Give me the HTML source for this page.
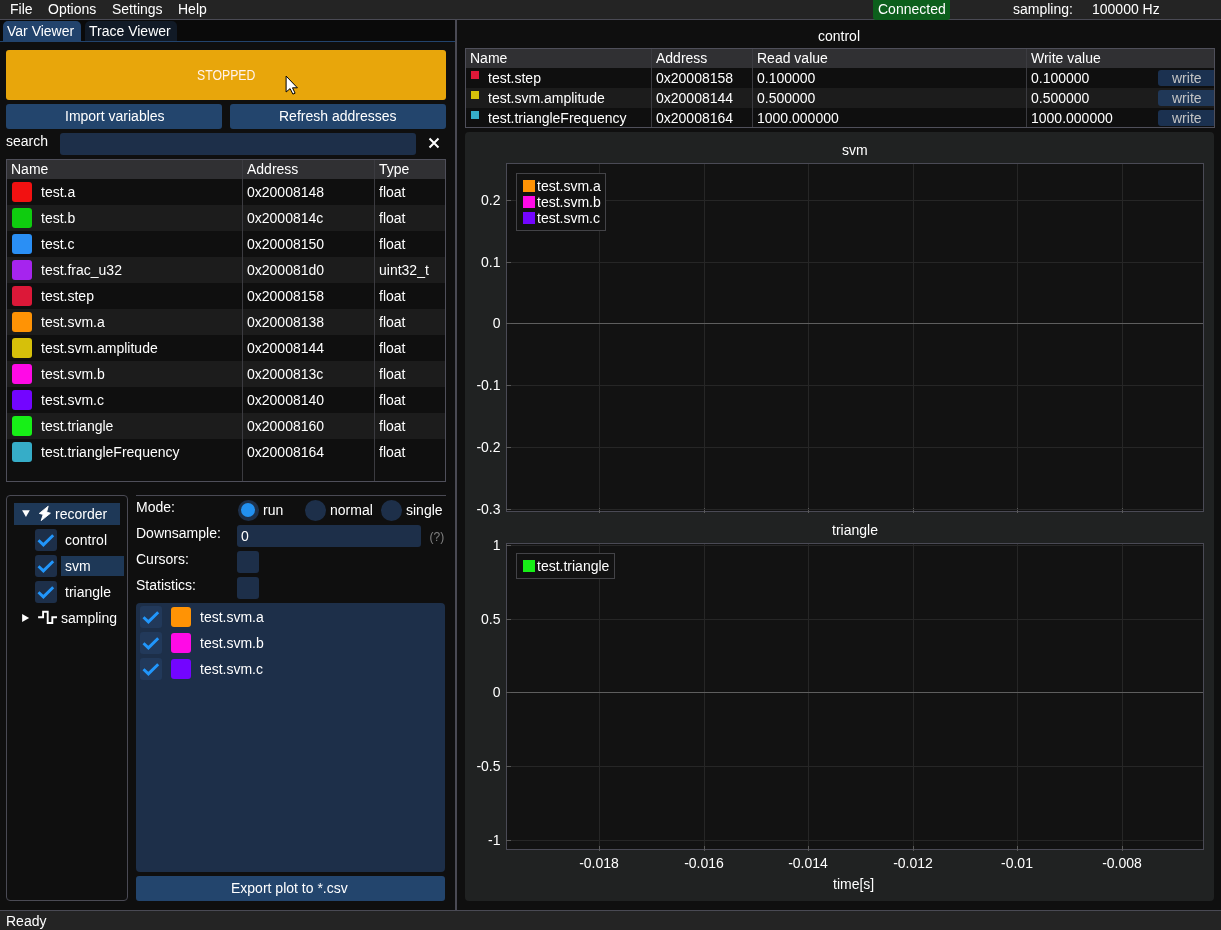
<!DOCTYPE html>
<html><head><meta charset="utf-8">
<style>
*{margin:0;padding:0;box-sizing:border-box}
html,body{width:1221px;height:930px;overflow:hidden;-webkit-font-smoothing:antialiased;background:#0f0f0f;font-family:"Liberation Sans",sans-serif;font-size:14px;color:#fff}
.a{position:absolute}
.t{position:absolute;white-space:nowrap;line-height:16px;font-size:14px;color:#fff}
.btn{position:absolute;background:#23456d;border-radius:3px}
.frame{position:absolute;background:#1d2f49;border-radius:3px}
.hl{position:absolute;background:#1e3857}
.cb{position:absolute;width:22px;height:22px;background:#1d2f49;border-radius:3px}
.sw{position:absolute;width:20px;height:20px;border-radius:3px}
.hline{position:absolute;height:1px}
.vline{position:absolute;width:1px}
#root{position:absolute;left:0;top:0;width:1221px;height:930px;will-change:transform}
</style></head><body><div id="root">

<!-- menu bar -->
<div class="a" style="left:0;top:0;width:1221px;height:19px;background:#242424"></div>
<div class="a" style="left:0;top:19px;width:1221px;height:1px;background:#4a4a54"></div>
<div class="t" style="left:10px;top:1px">File</div>
<div class="t" style="left:48px;top:1px">Options</div>
<div class="t" style="left:112px;top:1px">Settings</div>
<div class="t" style="left:178px;top:1px">Help</div>
<div class="a" style="left:873px;top:0;width:77px;height:20px;background:#0c5f1c;border-radius:0 0 3px 3px"></div>
<div class="t" style="left:878px;top:1px">Connected</div>
<div class="t" style="left:1013px;top:1px">sampling:</div>
<div class="t" style="left:1092px;top:1px">100000 Hz</div>

<!-- status bar -->
<div class="a" style="left:0;top:910px;width:1221px;height:1px;background:#4a4a54"></div>
<div class="a" style="left:0;top:911px;width:1221px;height:19px;background:#242424"></div>
<div class="t" style="left:6px;top:913px">Ready</div>

<!-- dock separator -->
<div class="a" style="left:455px;top:20px;width:2px;height:890px;background:#4a4a54"></div>

<!-- LEFT PANEL -->
<div class="a" style="left:0;top:20px;width:455px;height:21px;background:#0a0a0a"></div>
<div class="a" style="left:3px;top:21px;width:78px;height:20px;background:#22436c;border-radius:5px 5px 0 0"></div>
<div class="a" style="left:85px;top:21px;width:92px;height:20px;background:#111a26;border-radius:5px 5px 0 0"></div>
<div class="a" style="left:0;top:41px;width:455px;height:1px;background:#22436c"></div>
<div class="t" style="left:7px;top:23px">Var Viewer</div>
<div class="t" style="left:89px;top:23px">Trace Viewer</div>

<!-- stopped button -->
<div class="a" style="left:6px;top:50px;width:440px;height:50px;background:#e8a60b;border-radius:3px"></div>
<div class="t" style="left:197px;top:67px;color:#fff3ee;transform:scaleX(0.875);transform-origin:0 0">STOPPED</div>
<svg class="a" style="left:284.8px;top:75.3px" width="15" height="21" viewBox="0 0 15 21"><path d="M1.1 1.1V17L5.1 13.6L7.9 19.1L10.1 18.2L7.5 12.8H12.4Z" fill="#fff" stroke="#000" stroke-width="1" stroke-linejoin="miter"/></svg>
<div class="btn" style="left:6px;top:104px;width:216px;height:25px"></div>
<div class="t" style="left:65px;top:108px">Import variables</div>
<div class="btn" style="left:230px;top:104px;width:216px;height:25px"></div>
<div class="t" style="left:279px;top:108px">Refresh addresses</div>
<div class="t" style="left:6px;top:133px">search</div>
<div class="frame" style="left:60px;top:133px;width:356px;height:22px"></div>
<svg class="a" style="left:428px;top:137px" width="12" height="12" viewBox="0 0 12 12"><path d="M1.5 1.5L10.5 10.5M10.5 1.5L1.5 10.5" stroke="#fff" stroke-width="2"/></svg>
<!-- var table -->
<div class="a" style="left:6px;top:159px;width:440px;height:323px;border:1px solid #4f4f5a"></div>
<div class="a" style="left:7px;top:160px;width:438px;height:19px;background:#303033"></div>
<div class="a" style="left:7px;top:205px;width:438px;height:26px;background:#1c1c1c"></div>
<div class="a" style="left:7px;top:257px;width:438px;height:26px;background:#1c1c1c"></div>
<div class="a" style="left:7px;top:309px;width:438px;height:26px;background:#1c1c1c"></div>
<div class="a" style="left:7px;top:361px;width:438px;height:26px;background:#1c1c1c"></div>
<div class="a" style="left:7px;top:413px;width:438px;height:26px;background:#1c1c1c"></div>
<div class="a" style="left:242px;top:160px;width:1px;height:321px;background:#3b3b40"></div>
<div class="a" style="left:374px;top:160px;width:1px;height:321px;background:#3b3b40"></div>
<div class="t" style="left:11px;top:161px">Name</div>
<div class="t" style="left:247px;top:161px">Address</div>
<div class="t" style="left:379px;top:161px">Type</div>
<div class="sw" style="left:12px;top:182px;background:#f21111"></div>
<div class="t" style="left:41px;top:184px">test.a</div>
<div class="t" style="left:247px;top:184px">0x20008148</div>
<div class="t" style="left:379px;top:184px">float</div>
<div class="sw" style="left:12px;top:208px;background:#0fcc0f"></div>
<div class="t" style="left:41px;top:210px">test.b</div>
<div class="t" style="left:247px;top:210px">0x2000814c</div>
<div class="t" style="left:379px;top:210px">float</div>
<div class="sw" style="left:12px;top:234px;background:#2a8ff5"></div>
<div class="t" style="left:41px;top:236px">test.c</div>
<div class="t" style="left:247px;top:236px">0x20008150</div>
<div class="t" style="left:379px;top:236px">float</div>
<div class="sw" style="left:12px;top:260px;background:#a624ee"></div>
<div class="t" style="left:41px;top:262px">test.frac_u32</div>
<div class="t" style="left:247px;top:262px">0x200081d0</div>
<div class="t" style="left:379px;top:262px">uint32_t</div>
<div class="sw" style="left:12px;top:286px;background:#dc1838"></div>
<div class="t" style="left:41px;top:288px">test.step</div>
<div class="t" style="left:247px;top:288px">0x20008158</div>
<div class="t" style="left:379px;top:288px">float</div>
<div class="sw" style="left:12px;top:312px;background:#ff9305"></div>
<div class="t" style="left:41px;top:314px">test.svm.a</div>
<div class="t" style="left:247px;top:314px">0x20008138</div>
<div class="t" style="left:379px;top:314px">float</div>
<div class="sw" style="left:12px;top:338px;background:#d6c00a"></div>
<div class="t" style="left:41px;top:340px">test.svm.amplitude</div>
<div class="t" style="left:247px;top:340px">0x20008144</div>
<div class="t" style="left:379px;top:340px">float</div>
<div class="sw" style="left:12px;top:364px;background:#ff0ae6"></div>
<div class="t" style="left:41px;top:366px">test.svm.b</div>
<div class="t" style="left:247px;top:366px">0x2000813c</div>
<div class="t" style="left:379px;top:366px">float</div>
<div class="sw" style="left:12px;top:390px;background:#7305ff"></div>
<div class="t" style="left:41px;top:392px">test.svm.c</div>
<div class="t" style="left:247px;top:392px">0x20008140</div>
<div class="t" style="left:379px;top:392px">float</div>
<div class="sw" style="left:12px;top:416px;background:#17f017"></div>
<div class="t" style="left:41px;top:418px">test.triangle</div>
<div class="t" style="left:247px;top:418px">0x20008160</div>
<div class="t" style="left:379px;top:418px">float</div>
<div class="sw" style="left:12px;top:442px;background:#36adc8"></div>
<div class="t" style="left:41px;top:444px">test.triangleFrequency</div>
<div class="t" style="left:247px;top:444px">0x20008164</div>
<div class="t" style="left:379px;top:444px">float</div>
<!-- tree child -->
<div class="a" style="left:6px;top:495px;width:122px;height:406px;border:1px solid #4a4a54;border-radius:4px"></div>
<div class="hl" style="left:14px;top:503px;width:106px;height:22px"></div>
<svg class="a" style="left:22px;top:509px" width="9" height="9" viewBox="0 0 9 9"><path d="M0.1 1.2H7.8L3.95 7.9Z" fill="#fff"/></svg>
<svg class="a" style="left:38px;top:505px" width="14" height="17" viewBox="0 0 14 17"><path d="M10.2 1.2L1.3 8.4L5.2 9.4L3.2 15.6L12.4 8.2L8.6 7.1Z" fill="#fff" stroke="#fff" stroke-width="0.9" stroke-linejoin="round"/></svg>
<div class="t" style="left:55px;top:506px">recorder</div>
<div class="cb" style="left:35px;top:529px"></div>
<svg class="a" style="left:35px;top:529px" width="22" height="22" viewBox="0 0 22 22"><path d="M3.5 11.3L8.4 15.9L18.2 6.3" stroke="#2196fb" stroke-width="2.9" fill="none"/></svg>
<div class="t" style="left:65px;top:532px">control</div>
<div class="cb" style="left:35px;top:555px"></div>
<svg class="a" style="left:35px;top:555px" width="22" height="22" viewBox="0 0 22 22"><path d="M3.5 11.3L8.4 15.9L18.2 6.3" stroke="#2196fb" stroke-width="2.9" fill="none"/></svg>
<div class="hl" style="left:61px;top:556px;width:63px;height:20px"></div>
<div class="t" style="left:65px;top:558px">svm</div>
<div class="cb" style="left:35px;top:581px"></div>
<svg class="a" style="left:35px;top:581px" width="22" height="22" viewBox="0 0 22 22"><path d="M3.5 11.3L8.4 15.9L18.2 6.3" stroke="#2196fb" stroke-width="2.9" fill="none"/></svg>
<div class="t" style="left:65px;top:584px">triangle</div>
<svg class="a" style="left:22px;top:613px" width="9" height="10" viewBox="0 0 9 10"><path d="M0.1 1V9L7.1 4.95Z" fill="#fff"/></svg>
<svg class="a" style="left:38px;top:609px" width="20" height="16" viewBox="0 0 20 16"><path d="M0.1 8.2H5.1V2.7H9.7V14H14.3V8.2H19" stroke="#fff" stroke-width="1.9" fill="none"/></svg>
<div class="t" style="left:61px;top:610px">sampling</div>
<!-- settings -->
<div class="a" style="left:136px;top:495px;width:310px;height:1px;background:#4a4a54"></div>
<div class="t" style="left:136px;top:499px">Mode:</div>
<div class="a" style="left:237.5px;top:499.5px;width:21px;height:21px;border-radius:50%;background:#1d2f49"></div>
<div class="a" style="left:240.8px;top:502.7px;width:14.4px;height:14.4px;border-radius:50%;background:#2290f0"></div>
<div class="t" style="left:263px;top:502px">run</div>
<div class="a" style="left:304.5px;top:499.5px;width:21px;height:21px;border-radius:50%;background:#1d2f49"></div>
<div class="t" style="left:330px;top:502px">normal</div>
<div class="a" style="left:380.5px;top:499.5px;width:21px;height:21px;border-radius:50%;background:#1d2f49"></div>
<div class="t" style="left:406px;top:502px">single</div>
<div class="t" style="left:136px;top:525px">Downsample:</div>
<div class="frame" style="left:237px;top:525px;width:184px;height:22px"></div>
<div class="t" style="left:241px;top:528px">0</div>
<div class="t" style="left:429.5px;top:529px;font-size:12px;color:#808080">(?)</div>
<div class="t" style="left:136px;top:551px">Cursors:</div>
<div class="cb" style="left:237px;top:551px"></div>
<div class="t" style="left:136px;top:577px">Statistics:</div>
<div class="cb" style="left:237px;top:577px"></div>
<div class="frame" style="left:136px;top:603px;width:309px;height:269px;border-radius:4px"></div>
<div class="cb" style="left:140px;top:606px;background:#22395a"></div>
<svg class="a" style="left:140px;top:606px" width="22" height="22" viewBox="0 0 22 22"><path d="M3.5 11.3L8.4 15.9L18.2 6.3" stroke="#2196fb" stroke-width="2.9" fill="none"/></svg>
<div class="sw" style="left:171px;top:607px;background:#ff9305"></div>
<div class="t" style="left:200px;top:609px">test.svm.a</div>
<div class="cb" style="left:140px;top:632px;background:#22395a"></div>
<svg class="a" style="left:140px;top:632px" width="22" height="22" viewBox="0 0 22 22"><path d="M3.5 11.3L8.4 15.9L18.2 6.3" stroke="#2196fb" stroke-width="2.9" fill="none"/></svg>
<div class="sw" style="left:171px;top:633px;background:#ff0ae6"></div>
<div class="t" style="left:200px;top:635px">test.svm.b</div>
<div class="cb" style="left:140px;top:658px;background:#22395a"></div>
<svg class="a" style="left:140px;top:658px" width="22" height="22" viewBox="0 0 22 22"><path d="M3.5 11.3L8.4 15.9L18.2 6.3" stroke="#2196fb" stroke-width="2.9" fill="none"/></svg>
<div class="sw" style="left:171px;top:659px;background:#7305ff"></div>
<div class="t" style="left:200px;top:661px">test.svm.c</div>
<div class="btn" style="left:136px;top:876px;width:309px;height:25px"></div>
<div class="t" style="left:231px;top:880px">Export plot to *.csv</div>
<!-- RIGHT PANEL -->
<div class="t" style="left:818px;top:28px">control</div>
<div class="a" style="left:465px;top:48px;width:750px;height:80px;border:1px solid #4f4f5a"></div>
<div class="a" style="left:466px;top:49px;width:748px;height:19px;background:#303033"></div>
<div class="a" style="left:466px;top:88px;width:748px;height:20px;background:#1c1c1c"></div>
<div class="a" style="left:651px;top:49px;width:1px;height:78px;background:#3b3b40"></div>
<div class="a" style="left:752px;top:49px;width:1px;height:78px;background:#3b3b40"></div>
<div class="a" style="left:1026px;top:49px;width:1px;height:78px;background:#3b3b40"></div>
<div class="t" style="left:470px;top:50px">Name</div>
<div class="t" style="left:656px;top:50px">Address</div>
<div class="t" style="left:757px;top:50px">Read value</div>
<div class="t" style="left:1031px;top:50px">Write value</div>
<div class="a" style="left:471px;top:71px;width:8px;height:8px;background:#dc1838"></div>
<div class="t" style="left:488px;top:70px">test.step</div>
<div class="t" style="left:656px;top:70px">0x20008158</div>
<div class="t" style="left:757px;top:70px">0.100000</div>
<div class="t" style="left:1031px;top:70px">0.100000</div>
<div class="a" style="left:1158px;top:70px;width:56px;height:16px;background:#1b3150;border-radius:3px 0 0 3px"></div>
<div class="t" style="left:1172px;top:70px;color:#c4c4c4">write</div>
<div class="a" style="left:471px;top:91px;width:8px;height:8px;background:#d6c00a"></div>
<div class="t" style="left:488px;top:90px">test.svm.amplitude</div>
<div class="t" style="left:656px;top:90px">0x20008144</div>
<div class="t" style="left:757px;top:90px">0.500000</div>
<div class="t" style="left:1031px;top:90px">0.500000</div>
<div class="a" style="left:1158px;top:90px;width:56px;height:16px;background:#203858;border-radius:3px 0 0 3px"></div>
<div class="t" style="left:1172px;top:90px;color:#c4c4c4">write</div>
<div class="a" style="left:471px;top:111px;width:8px;height:8px;background:#36adc8"></div>
<div class="t" style="left:488px;top:110px">test.triangleFrequency</div>
<div class="t" style="left:656px;top:110px">0x20008164</div>
<div class="t" style="left:757px;top:110px">1000.000000</div>
<div class="t" style="left:1031px;top:110px">1000.000000</div>
<div class="a" style="left:1158px;top:110px;width:56px;height:16px;background:#1b3150;border-radius:3px 0 0 3px"></div>
<div class="t" style="left:1172px;top:110px;color:#c4c4c4">write</div>
<div class="a" style="left:465px;top:132px;width:749px;height:769px;background:#202222;border-radius:4px"></div>
<div class="t" style="left:842px;top:142px">svm</div>
<div class="t" style="left:832px;top:522px">triangle</div>
<div class="a" style="left:506px;top:163px;width:698px;height:349px;background:#121212;border:1px solid #4a4a55"></div>
<div class="a" style="left:599px;top:164px;width:1px;height:347px;background:#262626"></div>
<div class="a" style="left:599px;top:508px;width:1px;height:5px;background:#5a5a5a"></div>
<div class="a" style="left:704px;top:164px;width:1px;height:347px;background:#262626"></div>
<div class="a" style="left:704px;top:508px;width:1px;height:5px;background:#5a5a5a"></div>
<div class="a" style="left:808px;top:164px;width:1px;height:347px;background:#262626"></div>
<div class="a" style="left:808px;top:508px;width:1px;height:5px;background:#5a5a5a"></div>
<div class="a" style="left:913px;top:164px;width:1px;height:347px;background:#262626"></div>
<div class="a" style="left:913px;top:508px;width:1px;height:5px;background:#5a5a5a"></div>
<div class="a" style="left:1017px;top:164px;width:1px;height:347px;background:#262626"></div>
<div class="a" style="left:1017px;top:508px;width:1px;height:5px;background:#5a5a5a"></div>
<div class="a" style="left:1122px;top:164px;width:1px;height:347px;background:#262626"></div>
<div class="a" style="left:1122px;top:508px;width:1px;height:5px;background:#5a5a5a"></div>
<div class="a" style="left:507px;top:200px;width:696px;height:1px;background:#262626"></div>
<div class="a" style="left:506px;top:200px;width:5px;height:1px;background:#5a5a5a"></div>
<div class="t" style="right:720.5px;top:192px">0.2</div>
<div class="a" style="left:507px;top:262px;width:696px;height:1px;background:#262626"></div>
<div class="a" style="left:506px;top:262px;width:5px;height:1px;background:#5a5a5a"></div>
<div class="t" style="right:720.5px;top:254px">0.1</div>
<div class="a" style="left:507px;top:323px;width:696px;height:1px;background:#5e5e5e"></div>
<div class="a" style="left:506px;top:323px;width:5px;height:1px;background:#5a5a5a"></div>
<div class="t" style="right:720.5px;top:315px">0</div>
<div class="a" style="left:507px;top:385px;width:696px;height:1px;background:#262626"></div>
<div class="a" style="left:506px;top:385px;width:5px;height:1px;background:#5a5a5a"></div>
<div class="t" style="right:720.5px;top:377px">-0.1</div>
<div class="a" style="left:507px;top:447px;width:696px;height:1px;background:#262626"></div>
<div class="a" style="left:506px;top:447px;width:5px;height:1px;background:#5a5a5a"></div>
<div class="t" style="right:720.5px;top:439px">-0.2</div>
<div class="a" style="left:507px;top:509px;width:696px;height:1px;background:#262626"></div>
<div class="a" style="left:506px;top:509px;width:5px;height:1px;background:#5a5a5a"></div>
<div class="t" style="right:720.5px;top:501px">-0.3</div>
<div class="a" style="left:506px;top:543px;width:698px;height:307px;background:#121212;border:1px solid #4a4a55"></div>
<div class="a" style="left:599px;top:544px;width:1px;height:305px;background:#262626"></div>
<div class="a" style="left:599px;top:846px;width:1px;height:5px;background:#5a5a5a"></div>
<div class="a" style="left:704px;top:544px;width:1px;height:305px;background:#262626"></div>
<div class="a" style="left:704px;top:846px;width:1px;height:5px;background:#5a5a5a"></div>
<div class="a" style="left:808px;top:544px;width:1px;height:305px;background:#262626"></div>
<div class="a" style="left:808px;top:846px;width:1px;height:5px;background:#5a5a5a"></div>
<div class="a" style="left:913px;top:544px;width:1px;height:305px;background:#262626"></div>
<div class="a" style="left:913px;top:846px;width:1px;height:5px;background:#5a5a5a"></div>
<div class="a" style="left:1017px;top:544px;width:1px;height:305px;background:#262626"></div>
<div class="a" style="left:1017px;top:846px;width:1px;height:5px;background:#5a5a5a"></div>
<div class="a" style="left:1122px;top:544px;width:1px;height:305px;background:#262626"></div>
<div class="a" style="left:1122px;top:846px;width:1px;height:5px;background:#5a5a5a"></div>
<div class="a" style="left:507px;top:545px;width:696px;height:1px;background:#262626"></div>
<div class="a" style="left:506px;top:545px;width:5px;height:1px;background:#5a5a5a"></div>
<div class="t" style="right:720.5px;top:537px">1</div>
<div class="a" style="left:507px;top:619px;width:696px;height:1px;background:#262626"></div>
<div class="a" style="left:506px;top:619px;width:5px;height:1px;background:#5a5a5a"></div>
<div class="t" style="right:720.5px;top:611px">0.5</div>
<div class="a" style="left:507px;top:692px;width:696px;height:1px;background:#5e5e5e"></div>
<div class="a" style="left:506px;top:692px;width:5px;height:1px;background:#5a5a5a"></div>
<div class="t" style="right:720.5px;top:684px">0</div>
<div class="a" style="left:507px;top:766px;width:696px;height:1px;background:#262626"></div>
<div class="a" style="left:506px;top:766px;width:5px;height:1px;background:#5a5a5a"></div>
<div class="t" style="right:720.5px;top:758px">-0.5</div>
<div class="a" style="left:507px;top:840px;width:696px;height:1px;background:#262626"></div>
<div class="a" style="left:506px;top:840px;width:5px;height:1px;background:#5a5a5a"></div>
<div class="t" style="right:720.5px;top:832px">-1</div>
<div class="t" style="left:559px;width:80px;text-align:center;top:855px">-0.018</div>
<div class="t" style="left:664px;width:80px;text-align:center;top:855px">-0.016</div>
<div class="t" style="left:768px;width:80px;text-align:center;top:855px">-0.014</div>
<div class="t" style="left:873px;width:80px;text-align:center;top:855px">-0.012</div>
<div class="t" style="left:977px;width:80px;text-align:center;top:855px">-0.01</div>
<div class="t" style="left:1082px;width:80px;text-align:center;top:855px">-0.008</div>
<div class="t" style="left:833px;top:876px">time[s]</div>
<div class="a" style="left:516px;top:173px;width:90px;height:58px;background:#121212;border:1px solid #434347"></div>
<div class="a" style="left:523px;top:180px;width:12px;height:12px;background:#ff9305"></div>
<div class="t" style="left:537px;top:178px">test.svm.a</div>
<div class="a" style="left:523px;top:196px;width:12px;height:12px;background:#ff0ae6"></div>
<div class="t" style="left:537px;top:194px">test.svm.b</div>
<div class="a" style="left:523px;top:212px;width:12px;height:12px;background:#7305ff"></div>
<div class="t" style="left:537px;top:210px">test.svm.c</div>
<div class="a" style="left:516px;top:553px;width:99px;height:26px;background:#121212;border:1px solid #434347"></div>
<div class="a" style="left:523px;top:560px;width:12px;height:12px;background:#17f017"></div>
<div class="t" style="left:537px;top:558px">test.triangle</div>

</div></body></html>
